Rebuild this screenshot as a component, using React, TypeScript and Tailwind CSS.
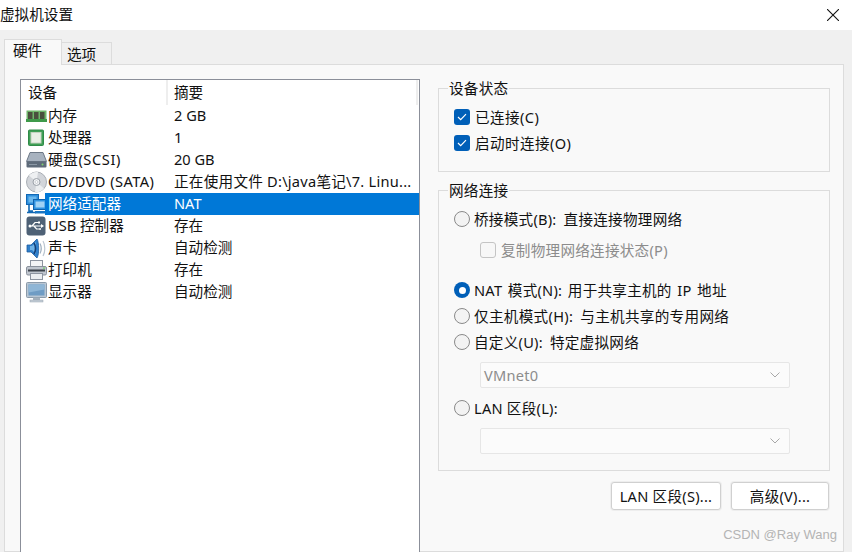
import { ReactNode } from 'react'

const RamIcon = () => (
  <svg width="21" height="22" viewBox="0 0 21 22">
    <rect x="0.5" y="5.5" width="20" height="11" fill="#6fb56a" />
    <rect x="0" y="14" width="21" height="3" fill="#3f9a4a" />
    <rect x="2" y="7" width="4.5" height="7" fill="#4a4f3e" />
    <rect x="8" y="7" width="4.5" height="7" fill="#4a4f3e" />
    <rect x="14" y="7" width="4.5" height="7" fill="#4a4f3e" />
  </svg>
)

const CpuIcon = () => (
  <svg width="21" height="22" viewBox="0 0 21 22">
    <rect x="2.5" y="3" width="15" height="15.5" rx="1" fill="#3f9f55" stroke="#2f8a48" />
    <rect x="5" y="5.5" width="10" height="10.5" fill="#e9efe6" stroke="#c4d2c0" />
  </svg>
)

const DiskIcon = () => (
  <svg width="21" height="22" viewBox="0 0 21 22">
    <path d="M4 3.5h13l3.5 9H0.5z" fill="#a7b2bf" stroke="#6c7886" />
    <rect x="0.5" y="12.5" width="20" height="6" rx="1" fill="#5e6b7a" />
    <rect x="3" y="15" width="8" height="1" fill="#8b98a5" />
    <circle cx="16.5" cy="15.5" r="1" fill="#7fd36f" />
  </svg>
)

const CdIcon = () => (
  <svg width="21" height="22" viewBox="0 0 21 22">
    <circle cx="10.5" cy="11" r="10" fill="#d2d5da" stroke="#a9aeb5" />
    <path d="M10.5 11L3 4.5A10 10 0 0 1 12 1z" fill="#eef0f2" />
    <path d="M10.5 11L18 17.5A10 10 0 0 1 9 21z" fill="#eceef0" />
    <circle cx="10.5" cy="11" r="3.5" fill="#f2f3f5" stroke="#9aa0a8" />
    <circle cx="10.5" cy="11" r="1.4" fill="#ffffff" stroke="#aeb3ba" strokeWidth="0.6" />
  </svg>
)

const NetIcon = () => (
  <svg width="21" height="22" viewBox="0 0 21 22">
    <rect x="0.5" y="1.5" width="12" height="10" fill="#2e8fdc" stroke="#1268b5" />
    <rect x="2.5" y="3.5" width="8" height="6" fill="#6bb8ee" />
    <path d="M3 12v6h4M1 19.5h9" fill="none" stroke="#1268b5" strokeWidth="1.6" />
    <rect x="7.5" y="6.5" width="13" height="10" fill="#2f93e0" stroke="#0f62ad" />
    <rect x="9.5" y="8.5" width="9" height="6" fill="#9fd2f5" />
    <rect x="9" y="18" width="11" height="2.5" fill="#1a76c4" />
  </svg>
)

const UsbIcon = () => (
  <svg width="21" height="22" viewBox="0 0 21 22">
    <rect x="0.5" y="1.5" width="19" height="19" rx="3" fill="#4e6176" />
    <path d="M3 11h13M6 11l3-3.5h3M8 11l2.5 3H13" fill="none" stroke="#ffffff" strokeWidth="1.2" />
    <path d="M15 9l3 2-3 2z" fill="#ffffff" />
    <circle cx="4" cy="11" r="1.5" fill="#ffffff" />
    <rect x="12" y="6.5" width="2" height="2" fill="#ffffff" />
    <circle cx="14" cy="14" r="1" fill="#ffffff" />
  </svg>
)

const SoundIcon = () => (
  <svg width="21" height="22" viewBox="0 0 21 22">
    <path d="M1 8h4l6-6c2 3 2.500 15 0 19l-6-6H1z" fill="#2f7fcb" stroke="#1c5c9f" strokeWidth="0.8" />
    <path d="M4 9h2l4-4v12l-4-4H4z" fill="#6fb2e6" />
    <path d="M8 6c2 3 2 8 0 11" fill="none" stroke="#123f78" strokeWidth="1.6" />
    <path d="M14 6.500c1.500 3 1.500 7 0 10" fill="none" stroke="#9fb0c0" strokeWidth="1.2" />
    <path d="M17 4c2.400 4 2.400 11 0 15" fill="none" stroke="#bcc7d2" strokeWidth="1.2" />
  </svg>
)

const PrinterIcon = () => (
  <svg width="21" height="22" viewBox="0 0 21 22">
    <rect x="4.500" y="1.500" width="12" height="7" fill="#f3f4f6" stroke="#8d94a0" />
    <rect x="0.500" y="7.500" width="20" height="8.500" rx="1.500" fill="#bfc5ce" stroke="#8a919c" />
    <rect x="2" y="10.500" width="17" height="2" fill="#3c424b" />
    <rect x="17" y="8.500" width="2" height="1.200" fill="#6fce6a" />
    <rect x="4.500" y="14.500" width="12" height="6" fill="#eceef1" stroke="#8d94a0" />
  </svg>
)

const MonitorIcon = () => (
  <svg width="21" height="22" viewBox="0 0 21 22">
    <rect x="0.500" y="1.500" width="20" height="15" rx="1" fill="#b9c6d3" stroke="#8b9aa9" />
    <rect x="2.500" y="3.500" width="16" height="11" fill="#6f9cc4" />
    <path d="M2.500 3.500h16v5l-16 3z" fill="#8fb6d6" />
    <rect x="7" y="16.500" width="7" height="2.500" fill="#a4b1bd" />
    <rect x="4" y="19" width="13" height="2" fill="#c4ced7" stroke="#99a5b1" strokeWidth="0.5" />
  </svg>
)

const DEVICES: {
  icon: ReactNode
  name: string
  nameClass?: string
  summary: string
  summaryClass?: string
  selected?: boolean
}[] = [
  { icon: <RamIcon />, name: '内存', summary: '2 GB' },
  { icon: <CpuIcon />, name: '处理器', summary: '1' },
  { icon: <DiskIcon />, name: '硬盘(SCSI)', nameClass: 'tracking-[0.6px]', summary: '20 GB' },
  {
    icon: <CdIcon />,
    name: 'CD/DVD (SATA)',
    nameClass: 'tracking-[0.45px]',
    summary: '正在使用文件 D:\\java笔记\\7. Linu...',
    summaryClass: 'tracking-[0.25px]',
  },
  { icon: <NetIcon />, name: '网络适配器', summary: 'NAT', selected: true },
  { icon: <UsbIcon />, name: 'USB 控制器', summary: '存在' },
  { icon: <SoundIcon />, name: '声卡', summary: '自动检测' },
  { icon: <PrinterIcon />, name: '打印机', summary: '存在' },
  { icon: <MonitorIcon />, name: '显示器', summary: '自动检测' },
]

const Checkbox = ({ label }: { label: string }) => (
  <div className="flex h-[26px] items-center">
    <span className="flex h-4 w-4 items-center justify-center rounded-[3px] bg-[#005fb8]">
      <svg width="10" height="8" viewBox="0 0 10 8">
        <path d="M1 4l2.700 2.700L9 1.200" fill="none" stroke="#ffffff" strokeWidth="1.200" />
      </svg>
    </span>
    <span className="ml-[5px] tracking-[0.4px]">{label}</span>
  </div>
)

const Radio = ({ label, checked, className }: { label: string; checked?: boolean; className?: string }) => (
  <div className={`flex h-[26px] items-center ${className ?? ''}`}>
    {checked ? (
      <span className="flex h-4 w-4 items-center justify-center rounded-full bg-[#005fb8]">
        <span className="h-[7px] w-[7px] rounded-full bg-white" />
      </span>
    ) : (
      <span className="h-4 w-4 rounded-full border border-[#8a8a8a] bg-[#f3f3f3]" />
    )}
    <span className="ml-1">{label}</span>
  </div>
)

const DisabledSelect = ({ value }: { value?: string }) => (
  <div className="mt-[7px] ml-[26px] flex h-[26px] w-[310px] items-center justify-between rounded-[2px] border border-[#e6e6e6] bg-[#fbfbfb] pr-[9px] pl-[3px] text-[#8c8c8c]">
    <span>{value}</span>
    <svg width="10" height="6" viewBox="0 0 10 6">
      <path d="M0.500 0.500L5 5l4.500-4.500" fill="none" stroke="#a8a8a8" />
    </svg>
  </div>
)

export default function App() {
  return (
    <div
      className="relative flex h-[552px] w-[852px] flex-col overflow-hidden bg-[#f0f0f0] text-[14.6px] leading-5 text-[#111111]"
      style={{ fontFamily: '"Noto Sans", "Noto Sans CJK SC", sans-serif' }}
    >
      <div className="flex h-[30px] shrink-0 items-center justify-between bg-white pr-[13px]">
        <span className="pb-[2px]">虚拟机设置</span>
        <svg width="12" height="12" viewBox="0 0 12 12">
          <path d="M0 0l12 12M12 0L0 12" stroke="#111111" strokeWidth="1.100" />
        </svg>
      </div>

      <div className="flex h-[34px] shrink-0 items-end pl-1">
        <div className="z-10 -mb-px flex h-[26px] w-[58px] border border-b-0 border-[#dcdcdc] bg-[#f9f9f9] pl-2">
          硬件
        </div>
        <div className="flex h-[22px] w-[50px] items-center justify-center border border-b-0 border-l-0 border-[#dcdcdc] pr-[10px]">
          选项
        </div>
      </div>

      <div className="ml-1 flex min-h-0 w-[840px] flex-1 border border-[#dcdcdc] bg-[#f9f9f9] pt-[13px] pl-[15px]">
        <div className="mt-px h-[500px] w-[400px] border-[1.5px] border-[#8b8f99] bg-white">
          <div className="flex h-[25px] items-center">
            <span className="w-[147px] border-r-2 border-[#eeeeee] pl-[7px] leading-[25px]">设备</span>
            <span className="flex-1 border-r-2 border-[#eeeeee] pl-[6px] leading-[25px]">摘要</span>
            <span className="w-[1px]" />
          </div>
          {DEVICES.map((d) => (
            <div key={d.name} className="flex h-[22px] pl-[5px]">
              <span className="w-[19px] shrink-0">{d.icon}</span>
              <div className={`flex flex-1 items-center pb-px pl-[3px] leading-[21px] ${d.selected ? 'bg-[#0078d7] text-white' : ''}`}>
                <span className={`w-[126px] shrink-0 whitespace-nowrap ${d.nameClass ?? ''}`}>{d.name}</span>
                <span className={`whitespace-nowrap ${d.summaryClass ?? ''}`}>{d.summary}</span>
              </div>
            </div>
          ))}
        </div>

        <div className="ml-[18px] w-[392px] tracking-[0.25px] [word-spacing:3px]">
          <fieldset className="h-[94px] border border-[#dcdcdc] pl-[15px]">
            <legend className="-ml-[6px] px-px">设备状态</legend>
            <div className="mt-[6px]">
              <Checkbox label="已连接(C)" />
              <Checkbox label="启动时连接(O)" />
            </div>
          </fieldset>

          <fieldset className="mt-2 h-[291px] border border-[#dcdcdc] pl-[15px]">
            <legend className="-ml-[6px] px-px">网络连接</legend>
            <Radio className="mt-[6px]" label="桥接模式(B): 直接连接物理网络" />
            <div className="mt-[5px] ml-[26px] flex h-[26px] items-center text-[#8c8c8c]">
              <span className="h-4 w-4 rounded-[3px] border border-[#c4c4c4] bg-[#f7f7f7]" />
              <span className="ml-[5px]">复制物理网络连接状态(P)</span>
            </div>
            <Radio className="mt-[14px] [word-spacing:1.5px]" checked label="NAT 模式(N): 用于共享主机的 IP 地址" />
            <Radio className="tracking-[0.3px]" label="仅主机模式(H): 与主机共享的专用网络" />
            <Radio label="自定义(U): 特定虚拟网络" />
            <DisabledSelect value="VMnet0" />
            <Radio className="mt-[7px] [word-spacing:0px]" label="LAN 区段(L):" />
            <DisabledSelect />
          </fieldset>

          <div className="mt-[11px] mr-px flex justify-end gap-[10px] [word-spacing:0px]">
            <button className="h-7 w-[110px] rounded-[3px] border border-[#d0d0d0] bg-white shadow-[0_0_0_1px_#eeeeee]">
              LAN 区段(S)...
            </button>
            <button className="h-7 w-[98px] rounded-[3px] border border-[#d0d0d0] bg-white shadow-[0_0_0_1px_#eeeeee]">
              高级(V)...
            </button>
          </div>
        </div>
      </div>

      <span
        className="absolute right-[15px] bottom-[9px] text-[13px] leading-4 text-[#b4b4b4]"
        style={{ fontFamily: '"Liberation Sans", sans-serif' }}
      >
        CSDN @Ray Wang
      </span>
    </div>
  )
}
